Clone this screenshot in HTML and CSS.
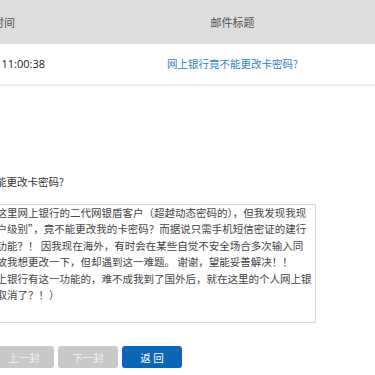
FILE: index.html
```html
<!DOCTYPE html>
<html lang="zh-CN">
<head>
<meta charset="utf-8">
<title>邮件详情</title>
<link rel="stylesheet" href="styles.css">
</head>
<body>
<div class="page">
  <div class="mail-table">
    <div class="thead">
      <div class="th">时间</div>
      <div class="th">邮件标题</div>
      <div class="th">操作</div>
    </div>
    <div class="tr">
      <div class="td td-time">2012-03-26 11:00:38</div>
      <div class="td td-subject"><a href="#" class="subject-link">网上银行竟不能更改卡密码?</a></div>
      <div class="td"></div>
    </div>
  </div>

  <div class="detail">
    <h2 class="detail-title">网上银行竟不能更改卡密码?</h2>
    <div class="msg-box">
      <div class="msg-line">您好！我是这里网上银行的二代网银盾客户（超越动态密码的），但我发现我现</div>
      <div class="msg-line">是高级<span class="fw">“</span>客户级别<span class="fw">”</span>，竟不能更改我的卡密码？而据说只需手机短信密证的建行</div>
      <div class="msg-line">网银都有此功能？！ 因我现在海外，有时会在某些自觉不安全场合多次输入同</div>
      <div class="msg-line">一个密码，故我想更改一下，但却遇到这一难题。 谢谢，望能妥善解决！！</div>
      <div class="msg-line">（在国内网上银行有这一功能的，难不成我到了国外后，就在这里的个人网上银</div>
      <div class="msg-line">行功能就被取消了？！）</div>
    </div>
    <div class="actions">
      <button class="btn btn-disabled" type="button">上一封</button>
      <button class="btn btn-disabled" type="button">下一封</button>
      <button class="btn btn-primary" type="button">返 回</button>
    </div>
  </div>
</div>
</body>
</html>
```

FILE: styles.css
```css
html, body {
  margin: 0;
  padding: 0;
  background: #ffffff;
}
body {
  overflow: hidden;
  font-family: "Noto Sans CJK SC", sans-serif;
  color: #333333;
}
.page {
  width: 375px;
}
.mail-table {
  margin-left: -88px;
  width: 557px;
}
.thead,
.tr {
  display: grid;
  grid-template-columns: 184px 273px 100px;
}
.thead {
  background: #dddddd;
  height: 44px;
  align-items: center;
}
.th {
  text-align: center;
  font-size: 11px;
  line-height: 16px;
  color: #555555;
}
.tr {
  height: 40px;
  align-items: center;
  border-bottom: 2px solid #ececec;
}
.td {
  font-size: 10.5px;
  line-height: 16px;
}
.td-time {
  text-align: right;
  padding-right: 51px;
  font-family: "Open Sans", "Noto Sans CJK SC", sans-serif;
  font-size: 11px;
  color: #222222;
}
.td-subject {
  text-align: center;
}
.subject-link {
  color: #2f7fc4;
  text-decoration: none;
}
.detail {
  margin-left: -67px;
  padding-top: 88px;
}
.detail-title {
  margin: 0;
  font-size: 10.5px;
  line-height: 16px;
  font-weight: normal;
  color: #333333;
}
.msg-box {
  margin: 14px 0 0 7px;
  width: 369px;
  height: 115px;
  border: 1px solid #d6d6d6;
  padding: 0 2px 2px 3px;
  font-size: 10.5px;
  line-height: 16.4px;
  color: #444444;
}
.msg-line {
  white-space: nowrap;
}
.fw {
  font-feature-settings: "fwid" 1;
}
.actions {
  display: flex;
  gap: 4px;
  margin: 23px 0 0 61px;
}
.btn {
  width: 60px;
  height: 22px;
  border: none;
  border-radius: 3px;
  padding: 0;
  font-family: "Noto Sans CJK SC", sans-serif;
  font-size: 10.5px;
  color: #ffffff;
}
.btn-disabled {
  background: #c9c9c9;
  color: #f2f2f2;
}
.btn-primary {
  background: #0a67b8;
}
```
